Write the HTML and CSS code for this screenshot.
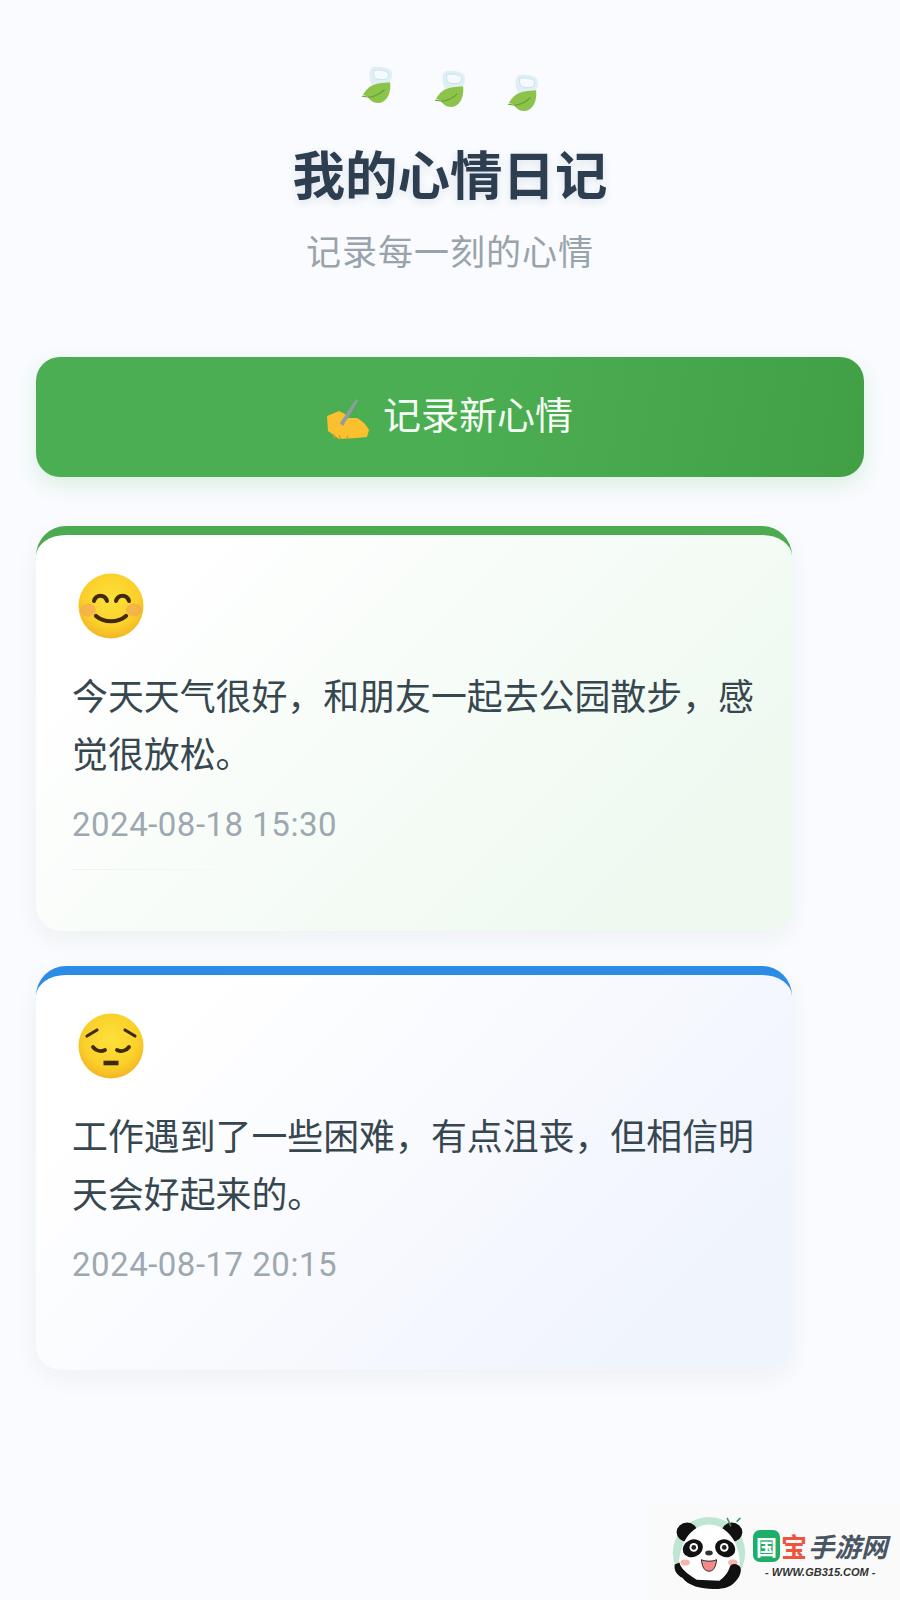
FILE: index.html
```html
<!DOCTYPE html>
<html lang="zh-CN">
<head>
    <meta charset="UTF-8">
    <meta name="viewport" content="width=device-width, initial-scale=1.0">
    <title>我的心情日记</title>
    <link rel="stylesheet" href="styles.css">
</head>
<body>
    <svg class="defs" width="0" height="0">
        <defs>
            <radialGradient id="face" cx="50%" cy="40%" r="60%">
                <stop offset="0%" stop-color="#fde03a"/>
                <stop offset="70%" stop-color="#fbd02a"/>
                <stop offset="100%" stop-color="#f3b523"/>
            </radialGradient>
        </defs>
        <symbol id="leaf" viewBox="0 0 32 40">
            <path d="M11 20C7 13 7 4 11 1c6-1 17 0 20 4 2 4 1 10-3 13-6 1-11 0-17 2z" fill="#dcecf5" opacity=".85"/>
            <path d="M12 5c5-2 12-1 16 2 1 3 0 6-3 7-5 1-9 0-12-2z" fill="#f4fafd" stroke="#c8e0ec"/>
            <path d="M1 31c3-7 9-12 18-13l11-1c1 10-2 19-10 22-8 1-12-3-14-7z" fill="#8cc34a"/>
            <path d="M0 32l8 1c7-1 12-4 16-8" fill="none" stroke="#659c35" stroke-width="1.2"/>
        </symbol>
    </svg>

    <div class="page">
        <header class="header">
            <div class="leaves">
                <svg class="leaf leaf-a"><use href="#leaf"/></svg>
                <svg class="leaf leaf-b"><use href="#leaf"/></svg>
                <svg class="leaf leaf-c"><use href="#leaf"/></svg>
            </div>
            <h1 class="title">我的心情日记</h1>
            <p class="subtitle">记录每一刻的心情</p>
        </header>

        <button class="btn-new">
            <svg class="hand" viewBox="8 12 44 41">
                <path d="M8 29l12-5 6 3 3 4h9q8 4 12 12l-2 7-10 1-18 1-8-6-3-2z" fill="#fbc02d"/>
                <path d="M37 12L21 36l3 3L39 14z" fill="#8f9da3"/>
                <path d="M14 47l2 4M20 48l2 4M28 49l1 3" stroke="#d99a1a" stroke-width="1.4"/>
            </svg>
            <span class="btn-label">记录新心情</span>
        </button>

        <article class="card card-happy">
            <svg class="mood" viewBox="0 0 66 66">
                <circle cx="33" cy="33" r="32.5" fill="url(#face)"/>
                <ellipse cx="10" cy="37" rx="8" ry="6.5" fill="#f2a25a" opacity=".6"/>
                <ellipse cx="56" cy="37" rx="8" ry="6.5" fill="#f2a25a" opacity=".6"/>
                <path d="M16 28c2-7 11-7 13 0M38 28c2-7 11-7 13 0" fill="none" stroke="#3f2a0e" stroke-width="4" stroke-linecap="round"/>
                <path d="M18 43c8 7 22 7 30 0" fill="none" stroke="#3f2a0e" stroke-width="4.2" stroke-linecap="round"/>
            </svg>
            <p class="card-text">今天天气很好，和朋友一起去公园散步，感觉很放松。</p>
            <time class="card-date">2024-08-18 15:30</time>
            <div class="hairline"></div>
        </article>

        <article class="card card-sad">
            <svg class="mood" viewBox="0 0 66 66">
                <circle cx="33" cy="33" r="32.5" fill="url(#face)"/>
                <path d="M9 23l10-6M47 17l10 6" fill="none" stroke="#3f2a0e" stroke-width="3.2" stroke-linecap="round"/>
                <path d="M15 34c3 4 8 5 12 3M51 34c-3 4-8 5-12 3" fill="none" stroke="#3f2a0e" stroke-width="3.8" stroke-linecap="round"/>
                <path d="M25.5 50h15" stroke="#3f2a0e" stroke-width="4.6"/>
            </svg>
            <p class="card-text">工作遇到了一些困难，有点沮丧，但相信明天会好起来的。</p>
            <time class="card-date">2024-08-17 20:15</time>
        </article>

        <aside class="watermark">
            <svg class="panda" viewBox="0 0 84 84">
                <circle cx="42" cy="40" r="38" fill="#bfe6d2"/>
                <ellipse cx="19" cy="18" rx="11" ry="10" fill="#111"/>
                <ellipse cx="66" cy="18" rx="11" ry="10" fill="#111"/>
                <path d="M18 74c-6-8-10-20-6-34 3-16 15-30 30-30s28 13 31 30c3 13 0 25-7 34-7 6-41 6-48 0z" fill="#fff"/>
                <ellipse cx="25" cy="35" rx="11" ry="9" fill="#111" transform="rotate(-25 25 35)"/>
                <ellipse cx="59" cy="35" rx="11" ry="9" fill="#111" transform="rotate(25 59 35)"/>
                <circle cx="26" cy="34" r="4.5" fill="#fff"/>
                <circle cx="58" cy="34" r="4.5" fill="#fff"/>
                <circle cx="26" cy="34" r="2.5" fill="#222"/>
                <circle cx="58" cy="34" r="2.5" fill="#222"/>
                <ellipse cx="42" cy="40" rx="4" ry="2.6" fill="#333"/>
                <path d="M34 47c4 2 12 2 16 0-1 9-4 12-8 12s-7-3-8-12z" fill="#f28a8a" stroke="#222"/>
                <ellipse cx="17" cy="50" rx="5" ry="3.2" fill="#f7b5ad"/>
                <ellipse cx="67" cy="50" rx="5" ry="3.2" fill="#f7b5ad"/>
                <path d="M14 66c-6-3-9-8-8-14l5-2c1 6 8 12 18 18l24 1c5-4 9-8 11-15 2-4 9-3 11 1 2 6-3 14-10 19-9 6-41 6-51-8z" fill="#111"/>
                <path d="M61 3l4 9M75 3l-4 4" stroke="#3f8f5f" stroke-width="1.6"/>
            </svg>
            <div class="brand">
                <div class="brand-name">
                    <span class="brand-guo">国</span>
                    <span class="brand-bao">宝</span>
                    <span class="brand-rest">手游网</span>
                </div>
                <div class="brand-url">- WWW.GB315.COM -</div>
            </div>
        </aside>
    </div>
</body>
</html>
```

FILE: styles.css
```css
* {
    box-sizing: border-box;
}
body {
    margin: 0;
    padding: 0;
    font-family: "Noto Sans CJK SC", "Noto Sans", sans-serif;
    background-color: #f9fbfe;
}
.defs {
    position: absolute;
}
.page {
    position: relative;
    height: 1600px;
    padding: 0 36px;
    overflow: hidden;
}
.header {
    text-align: center;
}
.leaves {
    display: flex;
    justify-content: center;
    gap: 43px;
    height: 120px;
    padding-top: 64px;
}
.leaf {
    width: 30px;
    height: 40px;
    filter: blur(0.4px);
}
.leaf-a {
    margin-top: 1px;
}
.leaf-b {
    margin-top: 5px;
}
.leaf-c {
    margin-top: 9px;
}
.title {
    margin: 16px 0 0;
    font-size: 52.5px;
    line-height: 72px;
    font-weight: 700;
    color: #2c3e50;
    text-shadow: 0 3px 8px rgba(44, 62, 80, 0.12);
}
.subtitle {
    margin: 18px 0 0;
    font-size: 35px;
    line-height: 48px;
    letter-spacing: 1px;
    color: #98a3ab;
}
.btn-new {
    display: flex;
    align-items: center;
    justify-content: center;
    gap: 12px;
    width: 828px;
    height: 120px;
    margin-top: 83px;
    padding: 0;
    border: none;
    border-radius: 24px;
    font-family: inherit;
    font-size: 38px;
    color: #f6fff6;
    background: linear-gradient(100deg, #4cae52 50%, #41a046 100%);
    box-shadow: 0 8px 20px rgba(76, 175, 80, 0.16);
}
.btn-label {
    margin-bottom: 10px;
}
.hand {
    width: 44px;
    height: 41px;
    margin-top: 4px;
}
.card {
    position: relative;
    width: 756px;
    height: 405px;
    margin-top: 49px;
    padding: 38px 36px 0;
    border-top: 9px solid;
    border-radius: 30px 30px 26px 26px;
    box-shadow: 0 8px 24px rgba(40, 60, 80, 0.05);
}
.card-happy {
    border-color: #4caa50;
    background: linear-gradient(135deg, #ffffff 12%, #eef9f0 85%);
}
.card-sad {
    height: 404px;
    margin-top: 35px;
    border-color: #2b8ce6;
    background: linear-gradient(135deg, #ffffff 15%, #f0f4fd 85%);
}
.mood {
    display: block;
    width: 66px;
    height: 66px;
    margin-left: 6px;
}
.card-text {
    margin: 26px 0 0;
    font-size: 35.9px;
    line-height: 58px;
    color: #37474f;
}
.card-date {
    display: block;
    margin-top: 21px;
    font-family: Roboto, "Noto Sans", sans-serif;
    font-size: 33px;
    line-height: 46px;
    letter-spacing: 0.5px;
    color: #9da8b0;
}
.hairline {
    width: 180px;
    height: 1px;
    margin-top: 21px;
    background: linear-gradient(90deg, #eef2f0, #f4f8f4 70%, transparent);
}
/* watermark sits over the page corner */
.watermark {
    position: absolute;
    right: 0;
    bottom: 0;
    display: flex;
    align-items: center;
    gap: 4px;
    width: 250px;
    height: 97px;
    padding: 6px 0 0 19px;
    background-color: #fafafa;
}
.panda {
    flex: none;
    width: 80px;
    height: 80px;
}
.brand {
    display: flex;
    flex-direction: column;
    align-items: center;
}
.brand-name {
    display: flex;
    align-items: center;
    gap: 1px;
    font-weight: 700;
    line-height: 32px;
}
.brand-guo {
    width: 27px;
    height: 32px;
    border-radius: 7px;
    font-size: 21px;
    line-height: 32px;
    text-align: center;
    color: #fff;
    background-color: #1fae6a;
}
.brand-bao {
    font-size: 26px;
    color: #ef5440;
}
.brand-rest {
    font-size: 26.5px;
    font-style: italic;
    color: #4a5563;
}
.brand-url {
    margin-top: 2px;
    font-family: "Liberation Sans", sans-serif;
    font-size: 11px;
    line-height: 16px;
    font-weight: 700;
    font-style: italic;
    color: #333;
}
```
